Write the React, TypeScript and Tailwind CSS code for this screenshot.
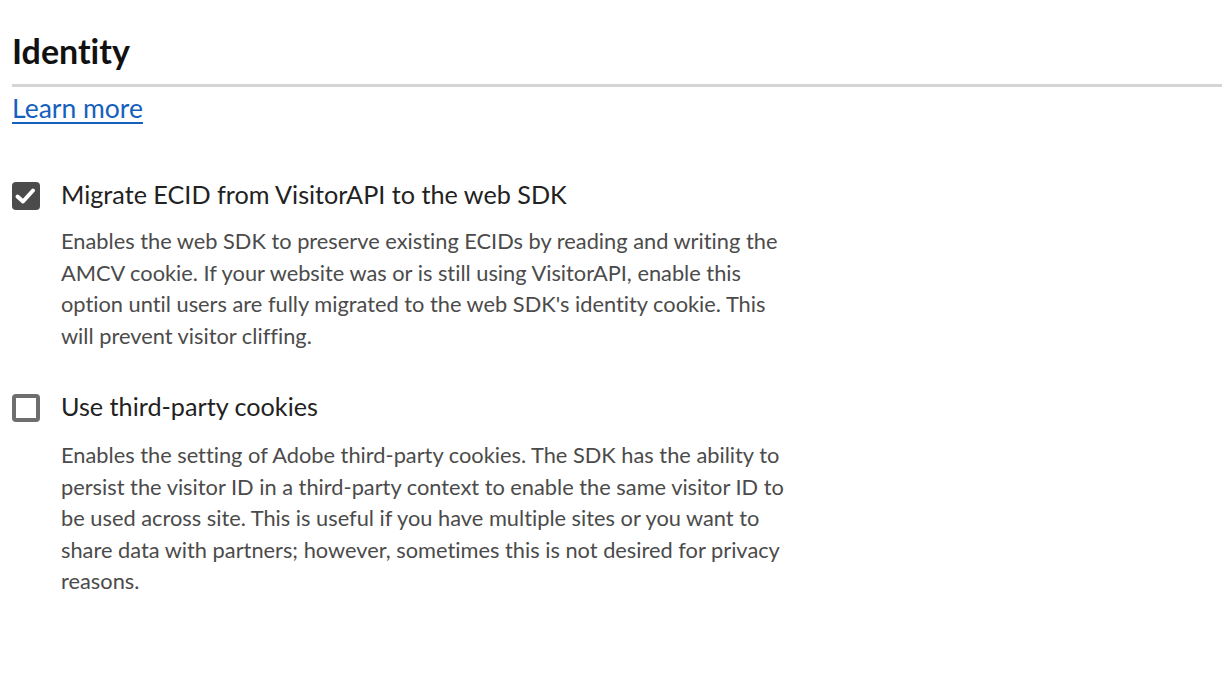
import React from "react";

function CheckedBox() {
  return (
    <div className="mt-[4px] h-[28px] w-[28px] shrink-0 rounded-[4px] bg-[#4b4b4b] flex items-center justify-center">
      <svg width="28" height="28" viewBox="0 0 28 28" fill="none">
        <path d="M5.5 14.5 L11 19.5 L21 8.5" stroke="#ffffff" strokeWidth="4" strokeLinecap="round" strokeLinejoin="round" />
      </svg>
    </div>
  );
}

function UncheckedBox() {
  return <div className="mt-[4px] h-[28px] w-[28px] shrink-0 rounded-[4px] border-[4px] border-[#6e6e6e] bg-white" />;
}

export default function App() {
  return (
    <div className="min-h-screen bg-white pl-[12px] pt-[30px] font-['Lato',sans-serif] [font-variant-ligatures:none]">
      <h1 className="text-[34px] leading-[42px] font-bold text-[#111111]">Identity</h1>
      <div className="mt-[12px] h-[3px] bg-[#d5d5d5]" />
      <a href="#" className="mt-[6px] inline-block text-[26.5px] leading-[30px] text-[#1560bd] underline underline-offset-[4px]">
        Learn more
      </a>

      <div className="mt-[54px] flex items-start gap-[21px]">
        <CheckedBox />
        <div>
          <div className="text-[25.2px] leading-[32px] text-[#222222]">Migrate ECID from VisitorAPI to the web SDK</div>
          <p className="mt-[15px] text-[21.8px] leading-[31.5px] text-[#4b4b4b]">
            Enables the web SDK to preserve existing ECIDs by reading and writing the
            <br />
            AMCV cookie. If your website was or is still using VisitorAPI, enable this
            <br />
            option until users are fully migrated to the web SDK's identity cookie. This
            <br />
            will prevent visitor cliffing.
          </p>
        </div>
      </div>

      <div className="mt-[39px] flex items-start gap-[21px]">
        <UncheckedBox />
        <div>
          <div className="text-[25.2px] leading-[32px] text-[#222222]">Use third-party cookies</div>
          <p className="mt-[17px] text-[21.8px] leading-[31.5px] text-[#4b4b4b]">
            Enables the setting of Adobe third-party cookies. The SDK has the ability to
            <br />
            persist the visitor ID in a third-party context to enable the same visitor ID to
            <br />
            be used across site. This is useful if you have multiple sites or you want to
            <br />
            share data with partners; however, sometimes this is not desired for privacy
            <br />
            reasons.
          </p>
        </div>
      </div>
    </div>
  );
}
